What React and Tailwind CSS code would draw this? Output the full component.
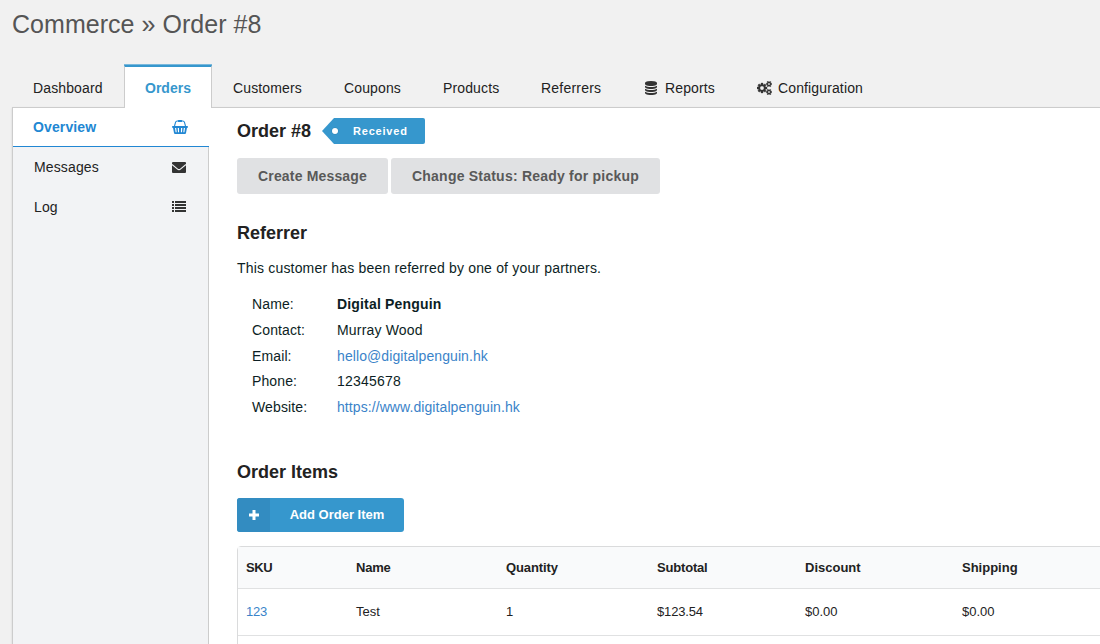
import React from "react";

function DatabaseIcon() {
  return (
    <svg viewBox="0 0 1792 1792" className="block h-[14px] w-[14px] fill-current">
      <path d="M896 768q237 0 443-43t325-127v170q0 69-103 128t-280 93.5-385 34.5-385-34.5-280-93.5-103-128v-170q119 84 325 127t443 43zm0 768q237 0 443-43t325-127v170q0 69-103 128t-280 93.5-385 34.5-385-34.5-280-93.5-103-128v-170q119 84 325 127t443 43zm0-384q237 0 443-43t325-127v170q0 69-103 128t-280 93.5-385 34.5-385-34.5-280-93.5-103-128v-170q119 84 325 127t443 43zm0-1152q208 0 385 34.5t280 93.5 103 128v128q0 69-103 128t-280 93.5-385 34.5-385-34.5-280-93.5-103-128v-128q0-69 103-128t280-93.5 385-34.5z" />
    </svg>
  );
}

function CogsIcon() {
  return (
    <svg viewBox="0 0 1920 1792" className="block h-[14px] w-[15px] fill-current stroke-current" strokeWidth="40">
      <path d="M896 896q0-106-75-181t-181-75-181 75-75 181 75 181 181 75 181-75 75-181zm768 512q0-52-38-90t-90-38-90 38-38 90q0 53 37.5 90.5t90.5 37.5 90.5-37.5 37.5-90.5zm0-1024q0-52-38-90t-90-38-90 38-38 90q0 53 37.5 90.5t90.5 37.5 90.5-37.5 37.5-90.5zm-384 421v185q0 10-7 19.5t-16 10.5l-155 24q-11 35-32 76 34 48 90 115 7 11 7 20 0 12-7 19-23 30-82.5 89.5t-78.5 59.5q-11 0-21-7l-115-90q-37 19-77 31-11 108-23 155-7 24-30 24h-186q-11 0-20-7.5t-10-17.5l-23-153q-34-10-75-31l-118 89q-7 7-20 7-11 0-21-8-144-133-144-160 0-9 7-19 10-14 41-53t47-61q-23-44-35-82l-152-24q-10-1-17-9.5t-7-19.5v-185q0-10 7-19.5t16-10.5l155-24q11-35 32-76-34-48-90-115-7-11-7-20 0-12 7-20 22-30 82-89t79-59q11 0 21 7l115 90q34-18 77-32 11-108 23-154 7-24 30-24h186q11 0 20 7.5t10 17.5l23 153q34 10 75 31l118-89q8-7 20-7 11 0 21 8 144 133 144 160 0 8-7 19-12 16-42 54t-45 60q23 48 34 82l152 23q10 2 17 10.5t7 19.5zm640 533v140q0 16-149 31-12 27-30 52 51 113 51 138 0 4-4 7-122 71-124 71-8 0-46-47t-52-68q-20 2-30 2t-30-2q-14 21-52 68t-46 47q-2 0-124-71-4-3-4-7 0-25 51-138-18-25-30-52-149-15-149-31v-140q0-16 149-31 13-29 30-52-51-113-51-138 0-4 4-7 4-2 35-20t59-34 30-16q8 0 46 46.5t52 67.5q20-2 30-2t30 2q51-71 92-112l6-2q4 0 124 70 4 3 4 7 0 25-51 138 17 23 30 52 149 15 149 31zm0-1024v140q0 16-149 31-12 27-30 52 51 113 51 138 0 4-4 7-122 71-124 71-8 0-46-47t-52-68q-20 2-30 2t-30-2q-14 21-52 68t-46 47q-2 0-124-71-4-3-4-7 0-25 51-138-18-25-30-52-149-15-149-31v-140q0-16 149-31 13-29 30-52-51-113-51-138 0-4 4-7 4-2 35-20t59-34 30-16q8 0 46 46.500t52 67.500q20-2 30-2t30 2q51-71 92-112l6-2q4 0 124 70 4 3 4 7 0 25-51 138 17 23 30 52 149 15 149 31z" />
    </svg>
  );
}

function BasketIcon() {
  return (
    <svg viewBox="0 0 16 14" className="block h-[14px] w-4 fill-current">
      <path d="M2.500 6L3.600 2.200Q4 1 5.200 1H10.800Q12 1 12.400 2.200L13.500 6" fill="none" stroke="currentColor" strokeWidth="1.100" />
      <rect x="6" y="0" width="4" height="2" rx=".5" />
      <path fillRule="evenodd" d="M.8 6H15.200Q16 6 16 6.900T15.200 7.800H15L14 13Q13.800 14 13 14H3Q2.200 14 2 13L1 7.800H.8Q0 7.800 0 6.900T.8 6ZM3 8L3.600 12.300H4.700L4.200 8ZM5.700 8L6 12.300H7.100L7 8ZM9 8L8.900 12.300H10L10.300 8ZM11.800 8L11.300 12.300H12.400L13 8Z" />
    </svg>
  );
}

function EnvelopeIcon() {
  return (
    <svg viewBox="0 0 14 11" className="block h-[11px] w-[14px]">
      <rect width="14" height="11" rx="1" fill="#333" />
      <path d="M0 2.500Q3 5 5.300 6.900Q7 8.400 8.700 6.900Q11 5 14 2.500" fill="none" stroke="#f2f3f5" strokeWidth="1.100" />
    </svg>
  );
}

function ListIcon() {
  return (
    <svg viewBox="0 0 14 11" className="mb-[2px] block h-[11px] w-[14px] fill-[#333]">
      {[0, 3, 6, 9].map((y) => (
        <g key={y}>
          <rect x="0" y={y} width="2" height="2" />
          <rect x="3" y={y} width="11" height="2" />
        </g>
      ))}
    </svg>
  );
}

function Tab({ children, className = "" }) {
  return <div className={`flex h-[43px] items-center pt-[5px] text-[14px] tracking-[0.13px] ${className}`}>{children}</div>;
}

const details = [
  ["Name:", "Digital Penguin", "font-bold tracking-[0.17px]"],
  ["Contact:", "Murray Wood", "tracking-[0.18px]"],
  ["Email:", "hello@digitalpenguin.hk", "tracking-[0.09px] text-[#3a83c9]"],
  ["Phone:", "12345678", "tracking-[0.21px]"],
  ["Website:", "https://www.digitalpenguin.hk", "tracking-[0.08px] text-[#3a83c9]"],
];

const cells = [
  ["123", "text-[#3a83c9] tracking-[-0.2px]"],
  ["Test", ""],
  ["1", ""],
  ["$123.54", "tracking-[-0.15px]"],
  ["$0.00", ""],
  ["$0.00", ""],
];

const headings = [
  ["SKU", "tracking-[-0.4px]"],
  ["Name", "tracking-[-0.2px]"],
  ["Quantity", "tracking-[-0.1px]"],
  ["Subtotal", "tracking-[-0.18px]"],
  ["Discount", ""],
  ["Shipping", ""],
];

export default function App() {
  return (
    <div className="flex h-[644px] w-[1100px] flex-col overflow-hidden whitespace-nowrap bg-[#f1f1f1] font-['Liberation_Sans',Arial,sans-serif] text-[#222]">
      <h1 className="h-[64px] pl-3 pt-[6px] text-[25px] leading-[37px] tracking-[0.04px] text-[#555]">Commerce » Order #8</h1>

      <nav className="ml-3 flex h-[43px] shrink-0">
        <Tab className="w-[112px] pl-[21px]">Dashboard</Tab>
        <div className="relative z-10 mt-px flex h-[43px] w-[88px] items-center justify-center border-x border-t-2 border-x-[#ccc] border-t-[#3697cd] bg-white pt-px text-[14px] font-bold text-[#3697cd] shadow-[0_-1px_0_#79b8dc]">
          Orders
        </div>
        <Tab className="w-[111px] pl-[21px]">Customers</Tab>
        <Tab className="w-[99px] pl-[21px]">Coupons</Tab>
        <Tab className="w-[98px] pl-[21px]">Products</Tab>
        <Tab className="w-[103px] pl-[21px]">
          <span className="tracking-[0.22px]">Referrers</span>
        </Tab>
        <Tab className="w-[113px] gap-[7px] pl-[21px]">
          <span className="text-[#333]"><DatabaseIcon /></span>Reports
        </Tab>
        <Tab className="gap-[6px] pl-[21px]">
          <span className="text-[#333]"><CogsIcon /></span>Configuration
        </Tab>
      </nav>

      <div className="ml-3 flex min-h-0 flex-1 border-l border-t border-[#ccc] bg-white shadow-[0_1px_2px_rgba(0,0,0,0.12)]">
        <aside className="w-[196px] shrink-0 text-[14px] tracking-[0.13px]">
          <div className="flex h-[39px] items-center justify-between border-b border-[#2187d3] bg-white pl-5 pr-[21px] text-[#2187d3]">
            <span className="font-bold">Overview</span>
            <BasketIcon />
          </div>
          <div className="h-[600px] border-r border-[#ccc] bg-[#f2f3f5]">
            <div className="flex h-10 items-center justify-between pl-[21px] pr-[22px]">
              Messages
              <EnvelopeIcon />
            </div>
            <div className="flex h-10 items-center justify-between pl-[21px] pr-[22px]">
              Log
              <ListIcon />
            </div>
          </div>
        </aside>

        <main className="min-w-0 flex-1 overflow-hidden pl-7 pt-[10px]">
          <div className="flex h-[26px] items-center">
            <h2 className="w-[85px] text-[18px] font-bold">Order #8</h2>
            <div className="relative flex h-[26px] w-[103px] items-center">
              <svg viewBox="0 0 103 26" className="absolute inset-0 h-[26px] w-[103px]">
                <path d="M0 13L12 0H101Q103 0 103 2V24Q103 26 101 26H12Z" fill="#3697cd" />
                <circle cx="13" cy="13" r="3.500" fill="#2c86b9" />
                <circle cx="13" cy="13" r="3" fill="#fff" />
              </svg>
              <span className="relative pl-[31px] text-[11px] font-bold tracking-[0.8px] text-white">Received</span>
            </div>
          </div>

          <div className="mt-[14px] flex gap-[3px] text-[14px] font-bold text-[#595959]">
            <div className="flex h-9 w-[151px] items-center justify-center rounded-[3px] bg-[#e0e1e3] tracking-[0.17px]">Create Message</div>
            <div className="flex h-9 w-[269px] items-center justify-center rounded-[3px] bg-[#e0e1e3] tracking-[0.22px]">Change Status: Ready for pickup</div>
          </div>

          <h2 className="mt-[26px] text-[18px] font-bold leading-[26px]">Referrer</h2>
          <p className="mt-[12px] text-[14px] leading-5 tracking-[0.18px] text-[#0c1e24]">This customer has been referred by one of your partners.</p>
          <dl className="mt-[14px] pl-[15px] text-[14px] leading-[25.75px] text-[#0c1e24]">
            {details.map(([k, v, c]) => (
              <div key={k} className="flex">
                <dt className="w-[85px] tracking-[0.12px]">{k}</dt>
                <dd className={c}>{v}</dd>
              </div>
            ))}
          </dl>

          <h2 className="mt-[38px] text-[18px] font-bold leading-[26px]">Order Items</h2>
          <div className="mt-[13px] flex h-[34px] w-[167px] overflow-hidden rounded-[3px] bg-[#3697cd] text-[13px] font-bold text-white">
            <div className="flex w-[33px] items-center justify-center bg-[#338cc1]">
              <svg viewBox="0 0 10 10" className="h-[10px] w-[10px]">
                <path d="M5 0V10M0 5H10" stroke="#fff" strokeWidth="3" />
              </svg>
            </div>
            <div className="flex flex-1 items-center justify-center">Add Order Item</div>
          </div>

          <table className="mt-[14px] w-[1000px] table-fixed border-separate border-spacing-0 rounded-tl-[4px] border border-[#dadbdc] text-left text-[13px]">
            <colgroup>
              <col className="w-[110px]" />
              <col className="w-[150px]" />
              <col className="w-[151px]" />
              <col className="w-[148px]" />
              <col className="w-[157px]" />
              <col />
            </colgroup>
            <thead>
              <tr className="h-[42px] bg-[#f9fafb]">
                {headings.map(([t, c]) => (
                  <th key={t} className={`border-b border-[#e0e1e2] p-0 pl-2 font-bold ${c}`}>{t}</th>
                ))}
              </tr>
            </thead>
            <tbody>
              <tr className="h-[47px]">
                {cells.map(([t, c], i) => (
                  <td key={i} className={`border-b border-[#e0e1e2] p-0 pl-2 ${c}`}>{t}</td>
                ))}
              </tr>
              <tr className="h-[47px]"><td colSpan={6} /></tr>
            </tbody>
          </table>
        </main>
      </div>
    </div>
  );
}
